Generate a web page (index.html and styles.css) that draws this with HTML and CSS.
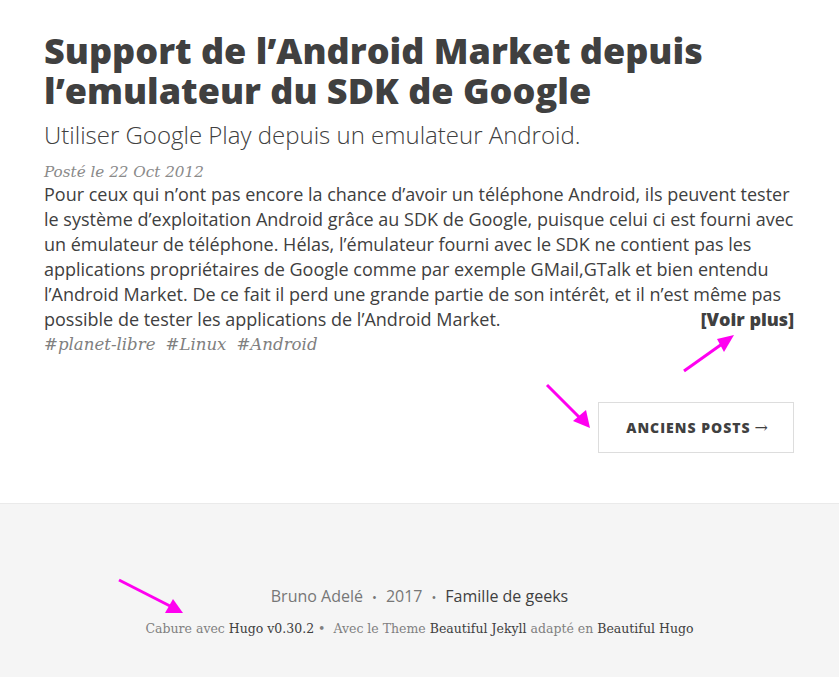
FILE: index.html
```html
<!DOCTYPE html>
<html lang="fr">
<head>
<meta charset="utf-8">
<title>Support de l'Android Market</title>
<link rel="stylesheet" href="styles.css">
</head>
<body>
<main class="page">
  <article class="post-preview">
    <h2 class="post-title">Support de l’Android Market depuis l’emulateur du SDK de Google</h2>
    <h3 class="post-subtitle">Utiliser Google Play depuis un emulateur Android.</h3>
    <p class="post-meta">Posté le 22 Oct 2012</p>
    <div class="post-entry">
      <p>Pour ceux qui n’ont pas encore la chance d’avoir un téléphone Android, ils peuvent tester le système d’exploitation Android grâce au SDK de Google, puisque celui ci est fourni avec un émulateur de téléphone. Hélas, l’émulateur fourni avec le SDK ne contient pas les applications propriétaires de Google comme par exemple GMail,GTalk et bien entendu l’Android Market. De ce fait il perd une grande partie de son intérêt, et il n’est même pas possible de tester les applications de l’Android Market. <a class="read-more" href="#">[Voir plus]</a></p>
    </div>
    <div class="blog-tags">
      <a href="#">#planet-libre</a>
      <a href="#">#Linux</a>
      <a href="#">#Android</a>
    </div>
  </article>
  <nav class="pager">
    <a class="pager-next" href="#">Anciens posts <span class="arrow">→</span></a>
  </nav>
</main>
<footer class="footer">
  <p class="copyright">Bruno Adelé<span class="sep">•</span>2017<span class="sep">•</span><a href="#">Famille de geeks</a></p>
  <p class="theme-by">Cabure avec <a href="#">Hugo v0.30.2</a> •&nbsp; Avec le Theme <a href="#">Beautiful Jekyll</a> adapté en <a href="#">Beautiful Hugo</a></p>
</footer>
<svg class="annotations" width="839" height="677" viewBox="0 0 839 677" aria-hidden="true">
  <g fill="#ff00f0" stroke="#ff00f0">
    <line x1="684" y1="371" x2="722" y2="344" stroke-width="3"/>
    <polygon points="734,335 717,339 724,352" stroke="none"/>
    <line x1="547" y1="385" x2="579" y2="417" stroke-width="3"/>
    <polygon points="590,428 573,421 586,410" stroke="none"/>
    <line x1="119" y1="580" x2="170" y2="606" stroke-width="3"/>
    <polygon points="183,613 165,613 173,599" stroke="none"/>
  </g>
</svg>
</body>
</html>
```

FILE: styles.css
```css
html, body {
  margin: 0;
  padding: 0;
}
body {
  background: #fff;
  color: #404040;
  font-family: "Open Sans", "DejaVu Sans", sans-serif;
  position: relative;
}
a {
  color: #404040;
  text-decoration: none;
}
.page {
  width: 751px;
  margin: 0 auto 0 44px;
  padding-top: 31px;
}
.post-title {
  font-size: 36px;
  font-weight: 800;
  line-height: 1.1;
  margin: 0;
}
.post-subtitle {
  font-size: 24px;
  font-weight: 300;
  line-height: 1.1;
  margin: 12px 0 13px;
}
.post-meta {
  font-family: "DejaVu Serif", serif;
  font-style: italic;
  font-size: 15.2px;
  color: #8a8a8a;
  margin: 0;
  line-height: 20px;
}
.post-entry p {
  font-size: 18px;
  line-height: 25px;
  margin: 0;
}
.read-more {
  float: right;
  font-weight: 800;
  margin-right: 1px;
}
.blog-tags {
  font-family: "DejaVu Serif", serif;
  font-style: italic;
  font-size: 16.6px;
  line-height: 26px;
  color: #808080;
  display: flex;
  gap: 10px;
}
.blog-tags a {
  color: #808080;
}
.pager {
  display: flex;
  justify-content: flex-end;
  margin-top: 44px;
  padding-right: 1px;
}
.pager-next {
  display: flex;
  align-items: center;
  border: 1px solid #ddd;
  padding: 15px 25px 15px 27px;
  font-size: 14px;
  font-weight: 800;
  letter-spacing: 1px;
  text-transform: uppercase;
  line-height: 19px;
  height: 19px;
}
.arrow {
  font-family: "DejaVu Serif", serif;
  font-weight: 400;
  font-size: 16px;
  margin-left: 4px;
  letter-spacing: 0;
}
.footer {
  margin-top: 50px;
  border-top: 1px solid #eaeaea;
  background: #f5f5f5;
  padding: 81px 0 40px;
  text-align: center;
}
.copyright {
  margin: 0;
  font-size: 16px;
  line-height: 22px;
  color: #777;
}
.sep {
  margin: 0 9px;
  font-size: 13px;
}
.theme-by {
  margin: 11px 0 0;
  font-family: "DejaVu Serif", serif;
  font-size: 12.5px;
  line-height: 20px;
  color: #808080;
}
.annotations {
  position: absolute;
  left: 0;
  top: 0;
  pointer-events: none;
}
```
